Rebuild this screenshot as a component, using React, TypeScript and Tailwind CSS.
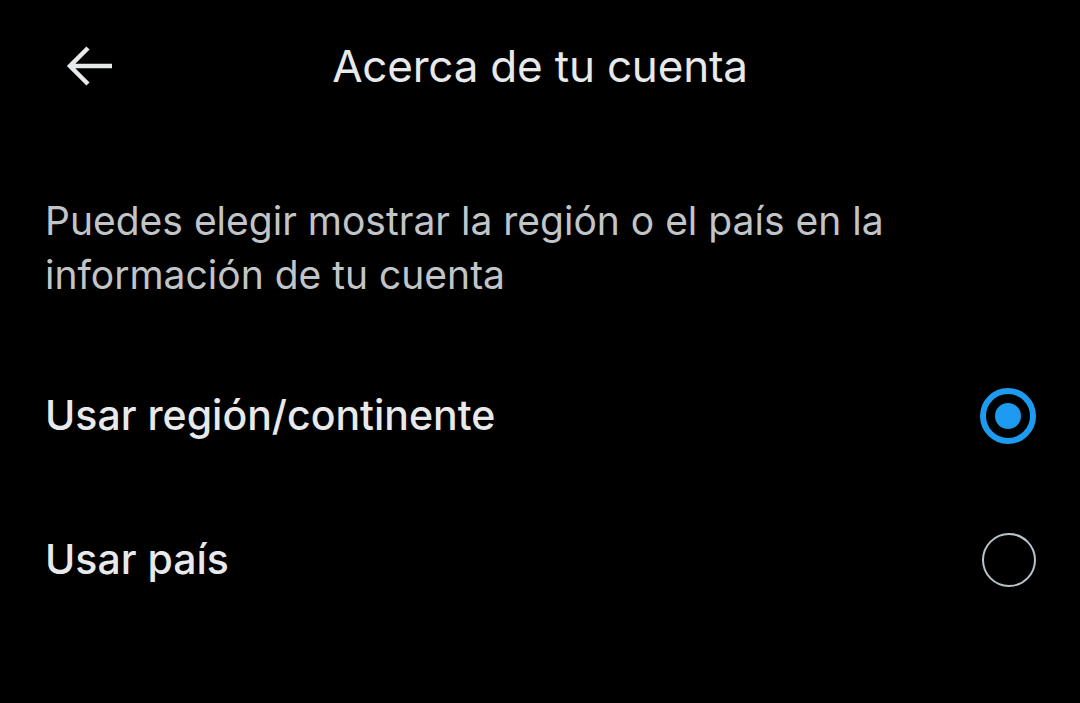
export default function App() {
  return (
    <div
      className="w-[1080px] h-[703px] bg-black overflow-hidden"
      style={{ fontFamily: "Inter, 'Noto Sans', sans-serif" }}
    >
      {/* Header */}
      <div className="grid grid-cols-[1fr_auto_1fr] items-center h-[132px]">
        <div className="pl-[64px] flex items-center">
          <svg width="52" height="44" viewBox="0 0 52 44" fill="none" aria-hidden="true">
            <path
              d="M48 22H6M24 4L6 22l18 18"
              stroke="#e7e9ea"
              strokeWidth="4.5"
              strokeLinecap="butt"
              strokeLinejoin="miter"
            />
          </svg>
        </div>
        <h1 className="text-[44px] text-[#e7e9ea] font-normal tracking-[-0.2px] leading-none">
          Acerca de tu cuenta
        </h1>
        <div />
      </div>

      {/* Description */}
      <p className="mt-[62px] px-[45px] text-[39px] leading-[54px] text-[#c2c5c8] pr-[140px]">
        Puedes elegir mostrar la región o el país en la información de tu cuenta
      </p>

      {/* Options */}
      <div className="mt-[42px] flex flex-col">
        <div className="flex items-center justify-between h-[144px] pl-[45px] pr-[44px]">
          <span className="text-[41px] font-medium text-[#e7e9ea]">Usar región/continente</span>
          <span className="w-[56px] h-[56px] rounded-full border-[6px] border-[#1d9bf0] flex items-center justify-center">
            <span className="w-[26px] h-[26px] rounded-full bg-[#1d9bf0]" />
          </span>
        </div>
        <div className="flex items-center justify-between h-[144px] pl-[45px] pr-[44px]">
          <span className="text-[41px] font-medium text-[#e7e9ea]">Usar país</span>
          <span className="w-[54px] h-[54px] rounded-full border-2 border-[#b9c3c9]" />
        </div>
      </div>
    </div>
  );
}
